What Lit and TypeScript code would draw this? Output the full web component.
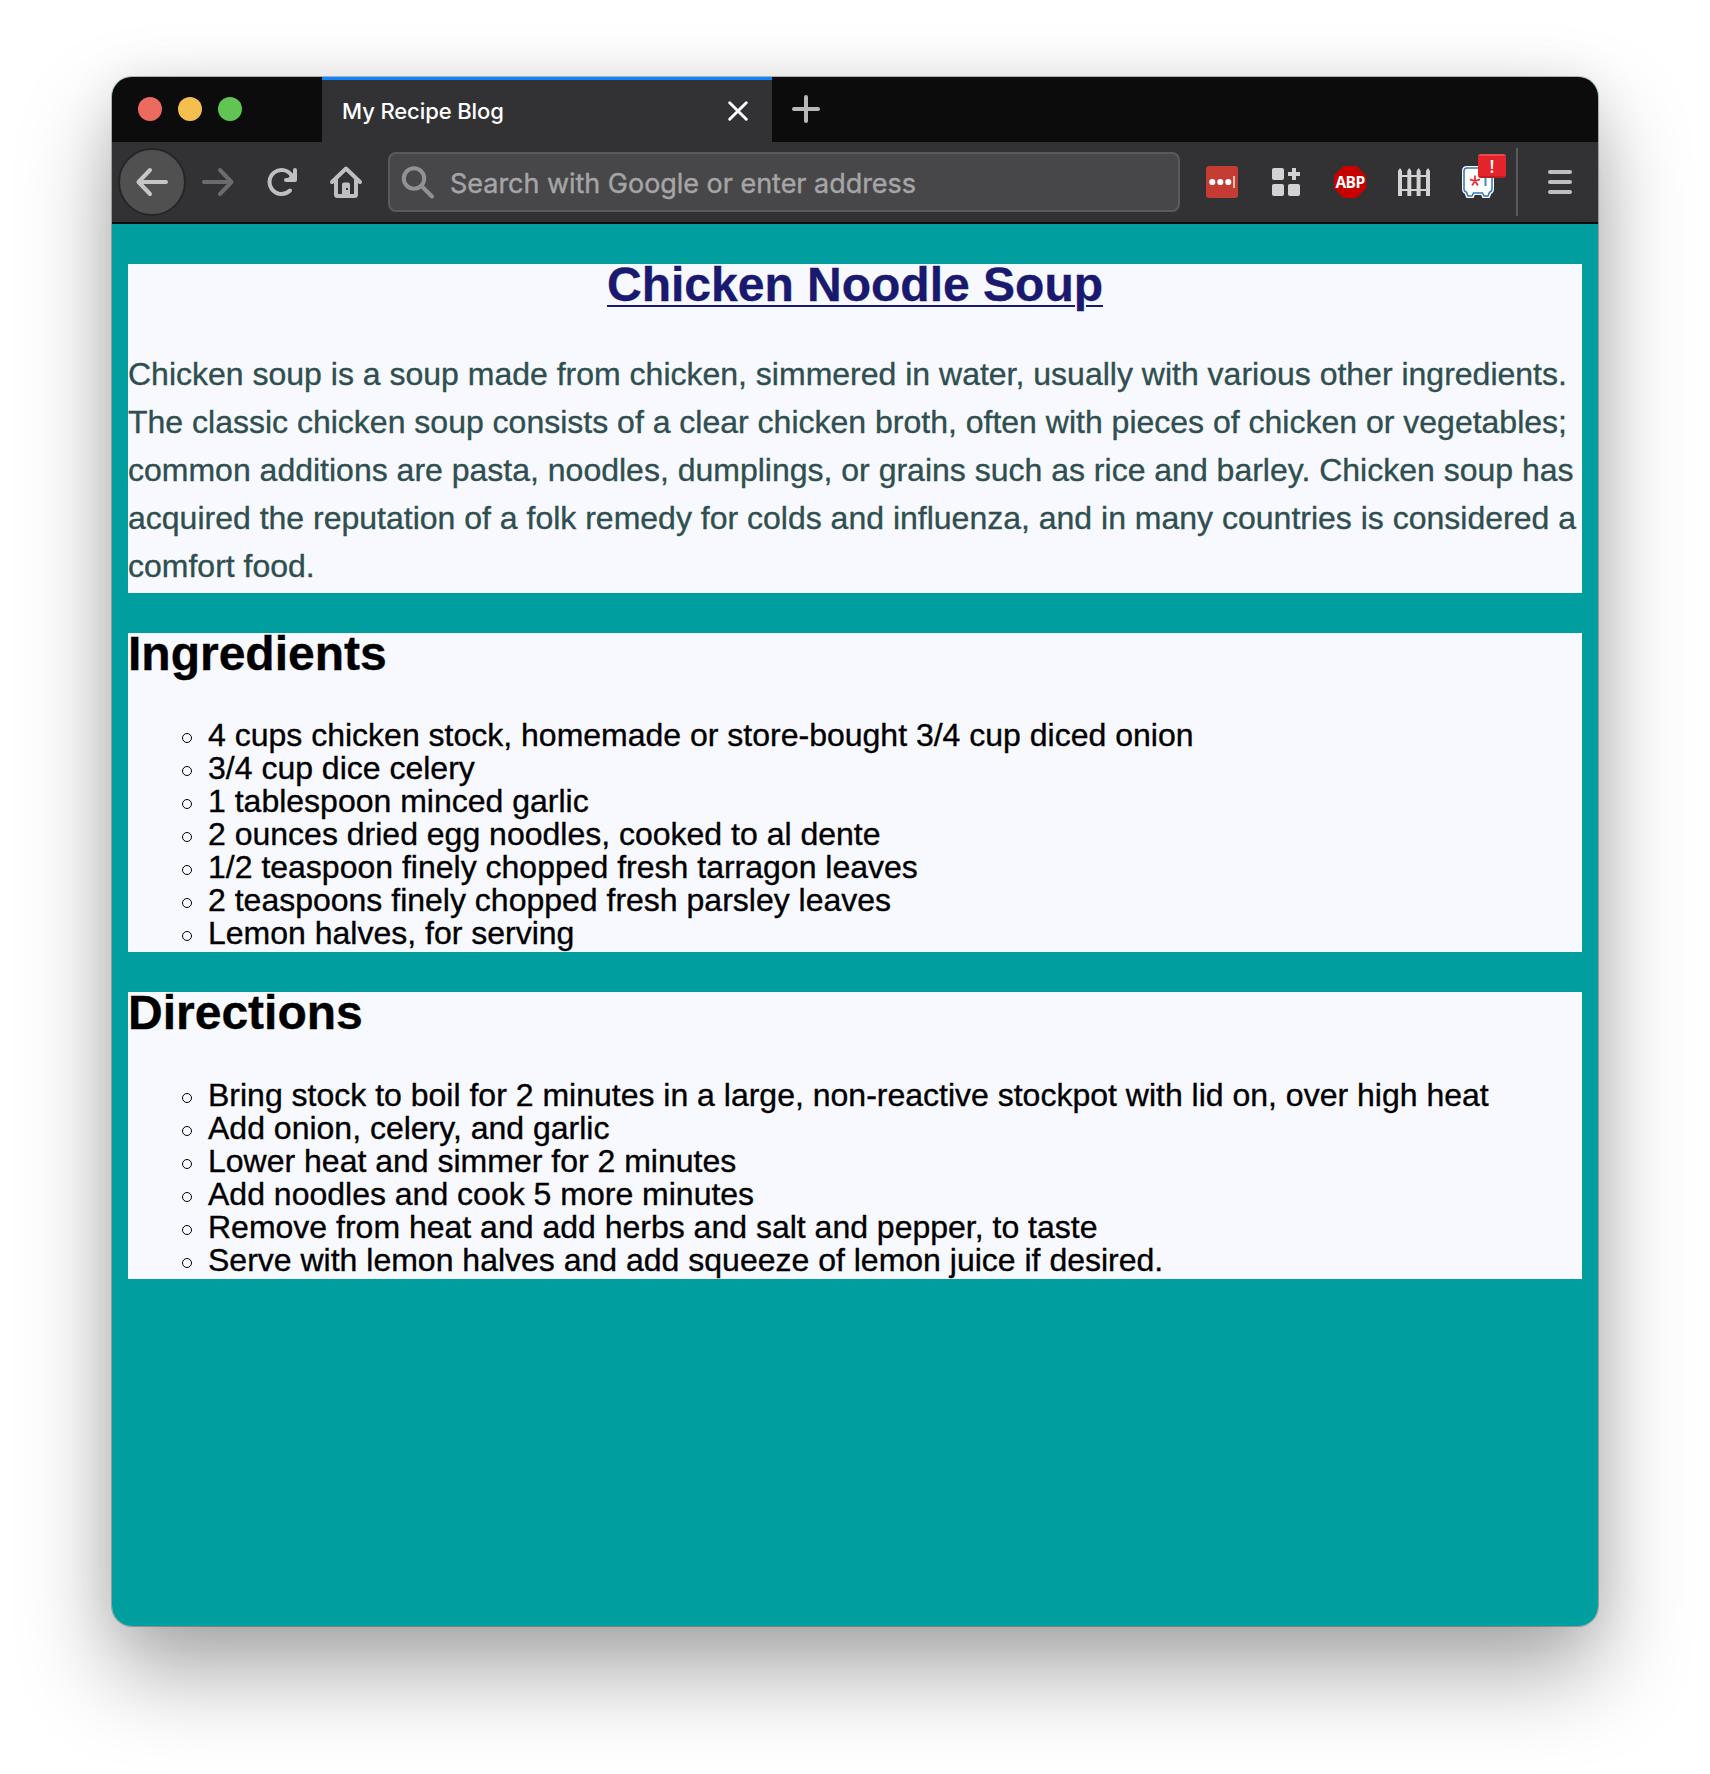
import { LitElement, html, css, svg } from "lit";
import { customElement } from "lit/decorators.js";

const INTRO = [
  "Chicken soup is a soup made from chicken, simmered in water, usually with various other ingredients.",
  "The classic chicken soup consists of a clear chicken broth, often with pieces of chicken or vegetables;",
  "common additions are pasta, noodles, dumplings, or grains such as rice and barley. Chicken soup has",
  "acquired the reputation of a folk remedy for colds and influenza, and in many countries is considered a",
  "comfort food.",
];

const INGREDIENTS = [
  "4 cups chicken stock, homemade or store-bought 3/4 cup diced onion",
  "3/4 cup dice celery",
  "1 tablespoon minced garlic",
  "2 ounces dried egg noodles, cooked to al dente",
  "1/2 teaspoon finely chopped fresh tarragon leaves",
  "2 teaspoons finely chopped fresh parsley leaves",
  "Lemon halves, for serving",
];

const DIRECTIONS = [
  "Bring stock to boil for 2 minutes in a large, non-reactive stockpot with lid on, over high heat",
  "Add onion, celery, and garlic",
  "Lower heat and simmer for 2 minutes",
  "Add noodles and cook 5 more minutes",
  "Remove from heat and add herbs and salt and pepper, to taste",
  "Serve with lemon halves and add squeeze of lemon juice if desired.",
];

@customElement("recipe-tabs")
class RecipeTabs extends LitElement {
  static styles = css`
    :host { display: flex; height: 65px; background: #0c0c0d; }
    .lights { display: flex; gap: 16px; padding: 20px 0 0 26px; width: 184px; box-sizing: border-box; width: 212px;
      border-right: 2px solid #29292b; margin-right: -2px; flex: none; }
    .light { width: 24px; height: 24px; border-radius: 50%; }
    .red { background: #ed6a5e; }
    .yellow { background: #f5bf4f; }
    .green { background: #61c554; }
    .tab { width: 450px; box-sizing: border-box; background: #323234; border-top: 3px solid #0a84ff;
      display: flex; align-items: center; justify-content: space-between; padding: 0 24px 0 20px; color: #fff;
      font: 500 22px/28px Inter, sans-serif; letter-spacing: -0.1px; }
    svg { display: block; }
    .plus { margin: 17px 0 0 19px; }
  `;
  render() {
    return html`
      <div class="lights"><i class="light red"></i><i class="light yellow"></i><i class="light green"></i></div>
      <div class="tab"><span>My Recipe Blog</span>
        <svg width="20" height="20" viewBox="0 0 20 20" stroke="#fff" stroke-width="2.900" stroke-linecap="round"><path d="M1.700 1.700 18.300 18.300M18.300 1.700 1.700 18.300"/></svg>
      </div>
      <svg class="plus" width="30" height="30" viewBox="0 0 30 30" stroke="#b8b8b9" stroke-width="4" stroke-linecap="round"><path d="M3 15H27M15 3V27"/></svg>
    `;
  }
}

@customElement("recipe-toolbar")
class RecipeToolbar extends LitElement {
  static styles = css`
    :host { display: flex; align-items: center; height: 80px; background: #323234; border-bottom: 2px solid #0c0c0d;
      padding: 0 22px 0 6px; }
    svg { display: block; flex: none; overflow: visible; }
    .back { width: 64px; height: 64px; border-radius: 50%; background: #505050; border: 2px solid #262628;
      display: grid; place-items: center; flex: none; }
    .forward { margin-left: 16px; }
    .reload { margin-left: 32px; }
    .home { margin-left: 32px; }
    .field { margin-left: 26px; width: 792px; height: 60px; box-sizing: border-box; border: 2px solid #5a5a5c;
      border-radius: 8px; background: #474749; display: flex; align-items: center; padding-left: 12px; flex: none; }
    .hint { margin-left: 15px; padding-top: 3px; font: 400 27px/36px Inter, sans-serif; color: #a5a5a6; white-space: nowrap;
      letter-spacing: -0.03px; -webkit-text-stroke: 0.4px #a5a5a6; }
    .ext { margin-left: 32px; }
    .first { margin-left: 26px; }
    .abp { width: 32px; height: 32px; display: grid; place-items: center; background: #c70000; flex: none;
      clip-path: polygon(30% 0, 70% 0, 100% 30%, 100% 70%, 70% 100%, 30% 100%, 0 70%, 0 30%);
      font: 700 15.500px/32px "Open Sans", sans-serif; letter-spacing: -0.6px; color: #fff; }
    .vault { position: relative; display: block; }
    .badge { position: absolute; left: 16px; top: -12px; width: 28px; height: 24px; border-radius: 3px;
      background: linear-gradient(#ee4a4f 0 2px, #e3242b 2px 22px, #c41b22 22px); color: #fff; text-align: center;
      font: 600 18px/25px "Open Sans", sans-serif; }
    .rule { width: 2px; height: 68px; background: #5b5b5d; margin-left: 22px; }
    .menu { margin-left: 30px; }
  `;
  render() {
    const slats = [0, 9.3, 18.6, 28];
    return html`
      <div class="back"><svg width="32" height="32" viewBox="0 0 32 32" fill="none" stroke="#c6c6c7" stroke-width="4" stroke-linecap="round" stroke-linejoin="round"><path d="M30 16H2.500M14 4 2.500 16 14 28"/></svg></div>
      <svg class="forward" width="32" height="32" viewBox="0 0 32 32" fill="none" stroke="#6b6b6c" stroke-width="4" stroke-linecap="round" stroke-linejoin="round"><path d="M2 16H29.500M18 4 29.500 16 18 28"/></svg>
      <svg class="reload" width="32" height="32" viewBox="0 0 32 32" fill="none" stroke="#bfbfc0" stroke-width="4" stroke-linecap="round" stroke-linejoin="round"><path d="M24 24.500A12 12 0 1 1 25.500 9.300"/><path d="M29 4V14H20L29 5Z" fill="#bfbfc0" stroke="none"/><path d="M29 4V14H20"/></svg>
      <svg class="home" width="32" height="32" viewBox="0 0 32 32" fill="none" stroke="#bfbfc0" stroke-width="4" stroke-linecap="round" stroke-linejoin="round"><path d="M2 16 16 2.500 30 16M6 14V28.500Q6 30 7.500 30H24.500Q26 30 26 28.500V14"/><path fill="#bfbfc0" fill-rule="evenodd" stroke="none" d="M12 31V18.500Q12 16.500 14 16.500H18Q20 16.500 20 18.500V31ZM16 22V24H18V22Z"/></svg>
      <div class="field">
        <svg width="33" height="33" viewBox="0 0 33 33" fill="none" stroke="#929293" stroke-width="4" stroke-linecap="round"><circle cx="12" cy="12.500" r="10.200"/><path d="M19.500 20 30 30.500"/></svg>
        <span class="hint">Search with Google or enter address</span>
      </div>
      <svg class="first" width="32" height="32" viewBox="0 0 32 32"><rect width="32" height="32" rx="3" fill="#c43c34"/><g fill="#fff"><circle cx="6.300" cy="16" r="3.100"/><circle cx="14.300" cy="16" r="3.100"/><circle cx="22.300" cy="16" r="3.100"/></g><path d="M28 10V22" stroke="#e9bab7" stroke-width="2"/></svg>
      <svg class="ext" width="32" height="32" viewBox="0 0 32 32" fill="#d2d2d3"><rect x="2" y="2" width="12" height="12" rx="2"/><rect x="2" y="18" width="12" height="12" rx="2"/><rect x="18" y="18" width="12" height="12" rx="2"/><path d="M22 2H26V6H30V10H26V14H22V10H18V6H22Z"/></svg>
      <span class="ext abp">ABP</span>
      <svg class="ext" width="32" height="32" viewBox="0 0 32 32" fill="#d2d2d3">${slats.map((x) => svg`<path d=${`M${x} 30V5L${x + 1.5} 2.500H${x + 2.5}L${x + 4} 5V30Z`}/>`)}<path d="M0 9H32V11H0ZM0 23H32V25H0Z"/></svg>
      <span class="ext vault">
        <svg width="32" height="32" viewBox="0 0 32 32"><path d="M5 1H27Q31 1 31 5V23Q31 26 28.500 27L27 31H21L20 28H12L11 31H5L3.500 27Q1 26 1 23V5Q1 1 5 1Z" fill="#fff" stroke="#fff" stroke-width="2" stroke-linejoin="round"/><path d="M5 2H27Q30 2 30 5V23Q30 25.500 27.500 26.200L26 30H22L20.500 27H11.500L10 30H6L4.500 26.200Q2 25.500 2 23V5Q2 2 5 2Z" fill="#fff" stroke="#2f75b5" stroke-width="1.500"/><path d="M13 9.500V15M8 13.300 13 15 18 13.300M10 19.500 13 15 16 19.500" stroke="#e0333a" stroke-width="1.800" fill="none"/><path d="M23.500 10V20" stroke="#4a87bf" stroke-width="2"/></svg>
        <span class="badge">!</span>
      </span>
      <div class="rule"></div>
      <svg class="menu" width="24" height="24" viewBox="0 0 24 24" stroke="#bfbfc0" stroke-width="4" stroke-linecap="round"><path d="M2 2H22M2 12H22M2 22H22"/></svg>
    `;
  }
}

@customElement("app-root")
class AppRoot extends LitElement {
  static styles = css`
    :host { display: block; box-sizing: border-box; width: 1710px; height: 1774px; padding: 77px 112px 0; background: #fff; overflow: hidden; }
    .window { height: 1549px; border-radius: 20px; overflow: hidden; background: #009e9f; }
    .frame { border-radius: 20px; box-shadow: 0 0 0 1px rgba(0,0,0,.25), 0 46px 90px rgba(0,0,0,.34), 0 0 50px rgba(0,0,0,.08); }
    .page { padding: 40px 16px; display: flex; flex-direction: column; gap: 40px; font: 32px/33px "Liberation Sans", Arial, sans-serif; color: #000; }
    .card { background: #f8f8ff; box-sizing: border-box; -webkit-text-stroke: 0.35px currentColor; }
    .about { height: 329px; }
    .ingredients { height: 319px; }
    .directions { height: 287px; }
    h1, h2 { margin: 0; font-size: 48px; line-height: 41px; font-weight: 700; }
    h1 { text-align: center; color: #191970; text-decoration: underline; text-decoration-thickness: 2px; text-underline-offset: 4px; text-decoration-skip-ink: auto; }
    p { margin: 45px 0 0; line-height: 48px; color: #2f4f4f; white-space: nowrap; }
    .line { display: block; }
    ul { list-style: none; margin: 45px 0 0; padding: 0 0 0 54px; }
    .directions ul { margin-top: 46px; }
    li { display: flex; align-items: center; white-space: nowrap; }
    li::before { content: ""; width: 8px; height: 8px; border: 1px solid #000; border-radius: 50%; margin: 5px 16px 0 0; flex: none; }
  `;
  render() {
    const list = (items: string[]) => html`<ul>${items.map((t) => html`<li>${t}</li>`)}</ul>`;
    return html`
      <div class="frame"><div class="window">
        <recipe-tabs></recipe-tabs>
        <recipe-toolbar></recipe-toolbar>
        <main class="page">
          <section class="card about"><h1>Chicken Noodle Soup</h1><p>${INTRO.map((t) => html`<span class="line">${t}</span>`)}</p></section>
          <section class="card ingredients"><h2>Ingredients</h2>${list(INGREDIENTS)}</section>
          <section class="card directions"><h2>Directions</h2>${list(DIRECTIONS)}</section>
        </main>
      </div></div>
    `;
  }
}
